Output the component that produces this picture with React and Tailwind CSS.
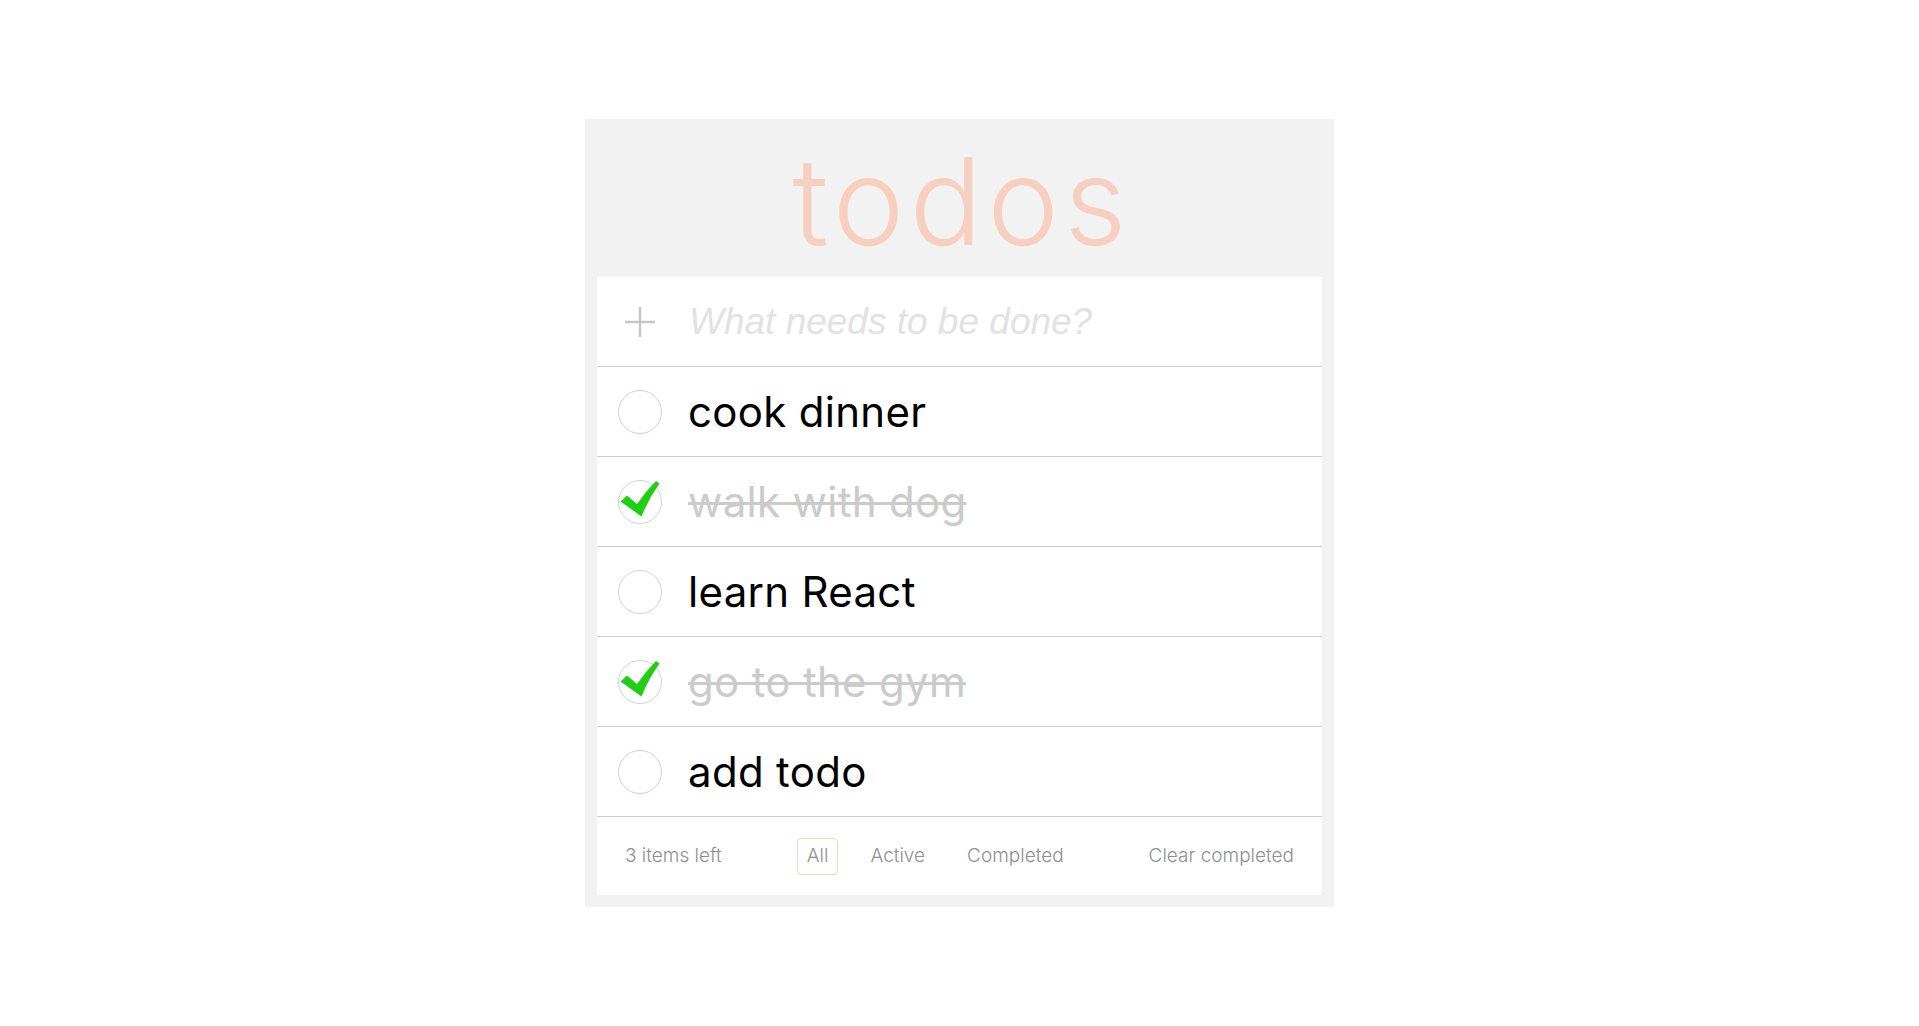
import { useState } from 'react';

const initialTodos = [
    { id: 1, text: 'cook dinner', done: false },
    { id: 2, text: 'walk with dog', done: true },
    { id: 3, text: 'learn React', done: false },
    { id: 4, text: 'go to the gym', done: true },
    { id: 5, text: 'add todo', done: false },
];

const filters = ['All', 'Active', 'Completed'];

const CheckMark = () => (
    <svg viewBox="0 0 44 44" className="absolute inset-0 w-[44px] h-[44px] overflow-visible">
        <path
            d="M1.5 20.5 L8 14.5 L18 23 Q26.5 10.5 37 0 L40.5 2.5 Q30 17 22.5 35.5 Z"
            fill="#20cf14"
        />
    </svg>
);

const TodoRow = ({ todo, onToggle }) => (
    <div className="h-[90px] flex items-center border-b border-[#cecece]">
        <button
            onClick={() => onToggle(todo.id)}
            className="relative ml-[21px] w-[44px] h-[44px] shrink-0 rounded-full border border-[#d2d2d2]"
        >
            {todo.done && <CheckMark />}
        </button>
        <span
            className={`ml-[26px] text-[42px] leading-none tracking-[0.3px] ${todo.done ? 'text-[#cbcbcb] line-through decoration-[3px]' : 'text-black'}`}
        >
            {todo.text}
        </span>
    </div>
);

const App = () => {
    const [todos, setTodos] = useState(initialTodos);
    const [filter, setFilter] = useState('All');
    const [draft, setDraft] = useState('');

    const toggle = (id) => {
        setTodos(todos.map((t) => (t.id === id ? { ...t, done: !t.done } : t)));
    };

    const visible = todos.filter((t) => {
        if (filter === 'Active') return !t.done;
        if (filter === 'Completed') return t.done;
        return true;
    });

    const left = todos.filter((t) => !t.done).length;

    return (
        <div className="min-h-screen bg-white pt-[119px] font-['Inter',sans-serif]">
            <div className="mx-auto w-[749px] bg-[#f2f2f2] px-3 pb-3">
                <h1 className="h-[158px] flex items-center justify-center pt-[6px] pl-[5px] text-[121px] font-light leading-none text-[#f6cfc1] tracking-[5px]">
                    todos
                </h1>

                <div className="bg-white">
                    {/* New todo */}
                    <div className="h-[90px] flex items-center border-b border-[#cecece]">
                        <div className="ml-[21px] w-[44px] h-[44px] shrink-0 flex items-center justify-center">
                            <svg viewBox="0 0 32 32" className="w-[32px] h-[32px]">
                                <path d="M16 1 V31 M1 16 H31" stroke="#c8c8c8" strokeWidth="2.5" />
                            </svg>
                        </div>
                        <input
                            value={draft}
                            onChange={(e) => setDraft(e.target.value)}
                            placeholder="What needs to be done?"
                            className="ml-[27px] flex-1 outline-none bg-transparent text-[37px] italic font-['Liberation_Sans',Arial,sans-serif] text-black placeholder:text-[#e2e2e2]"
                        />
                    </div>

                    {visible.map((todo) => (
                        <TodoRow key={todo.id} todo={todo} onToggle={toggle} />
                    ))}

                    {/* Footer */}
                    <div className="h-[78px] flex items-center justify-between px-[28px] text-[19px] font-light text-[#8f8f8f]">
                        <span>{left} items left</span>
                        <div className="flex items-center gap-[22px]">
                            {filters.map((f) => (
                                <button
                                    key={f}
                                    onClick={() => setFilter(f)}
                                    className={`h-[37px] px-[9px] rounded-[4px] border ${filter === f ? 'border-[#f5d3c6]' : 'border-transparent'}`}
                                >
                                    {f}
                                </button>
                            ))}
                        </div>
                        <button>Clear completed</button>
                    </div>
                </div>
            </div>
        </div>
    );
};

export default App;
